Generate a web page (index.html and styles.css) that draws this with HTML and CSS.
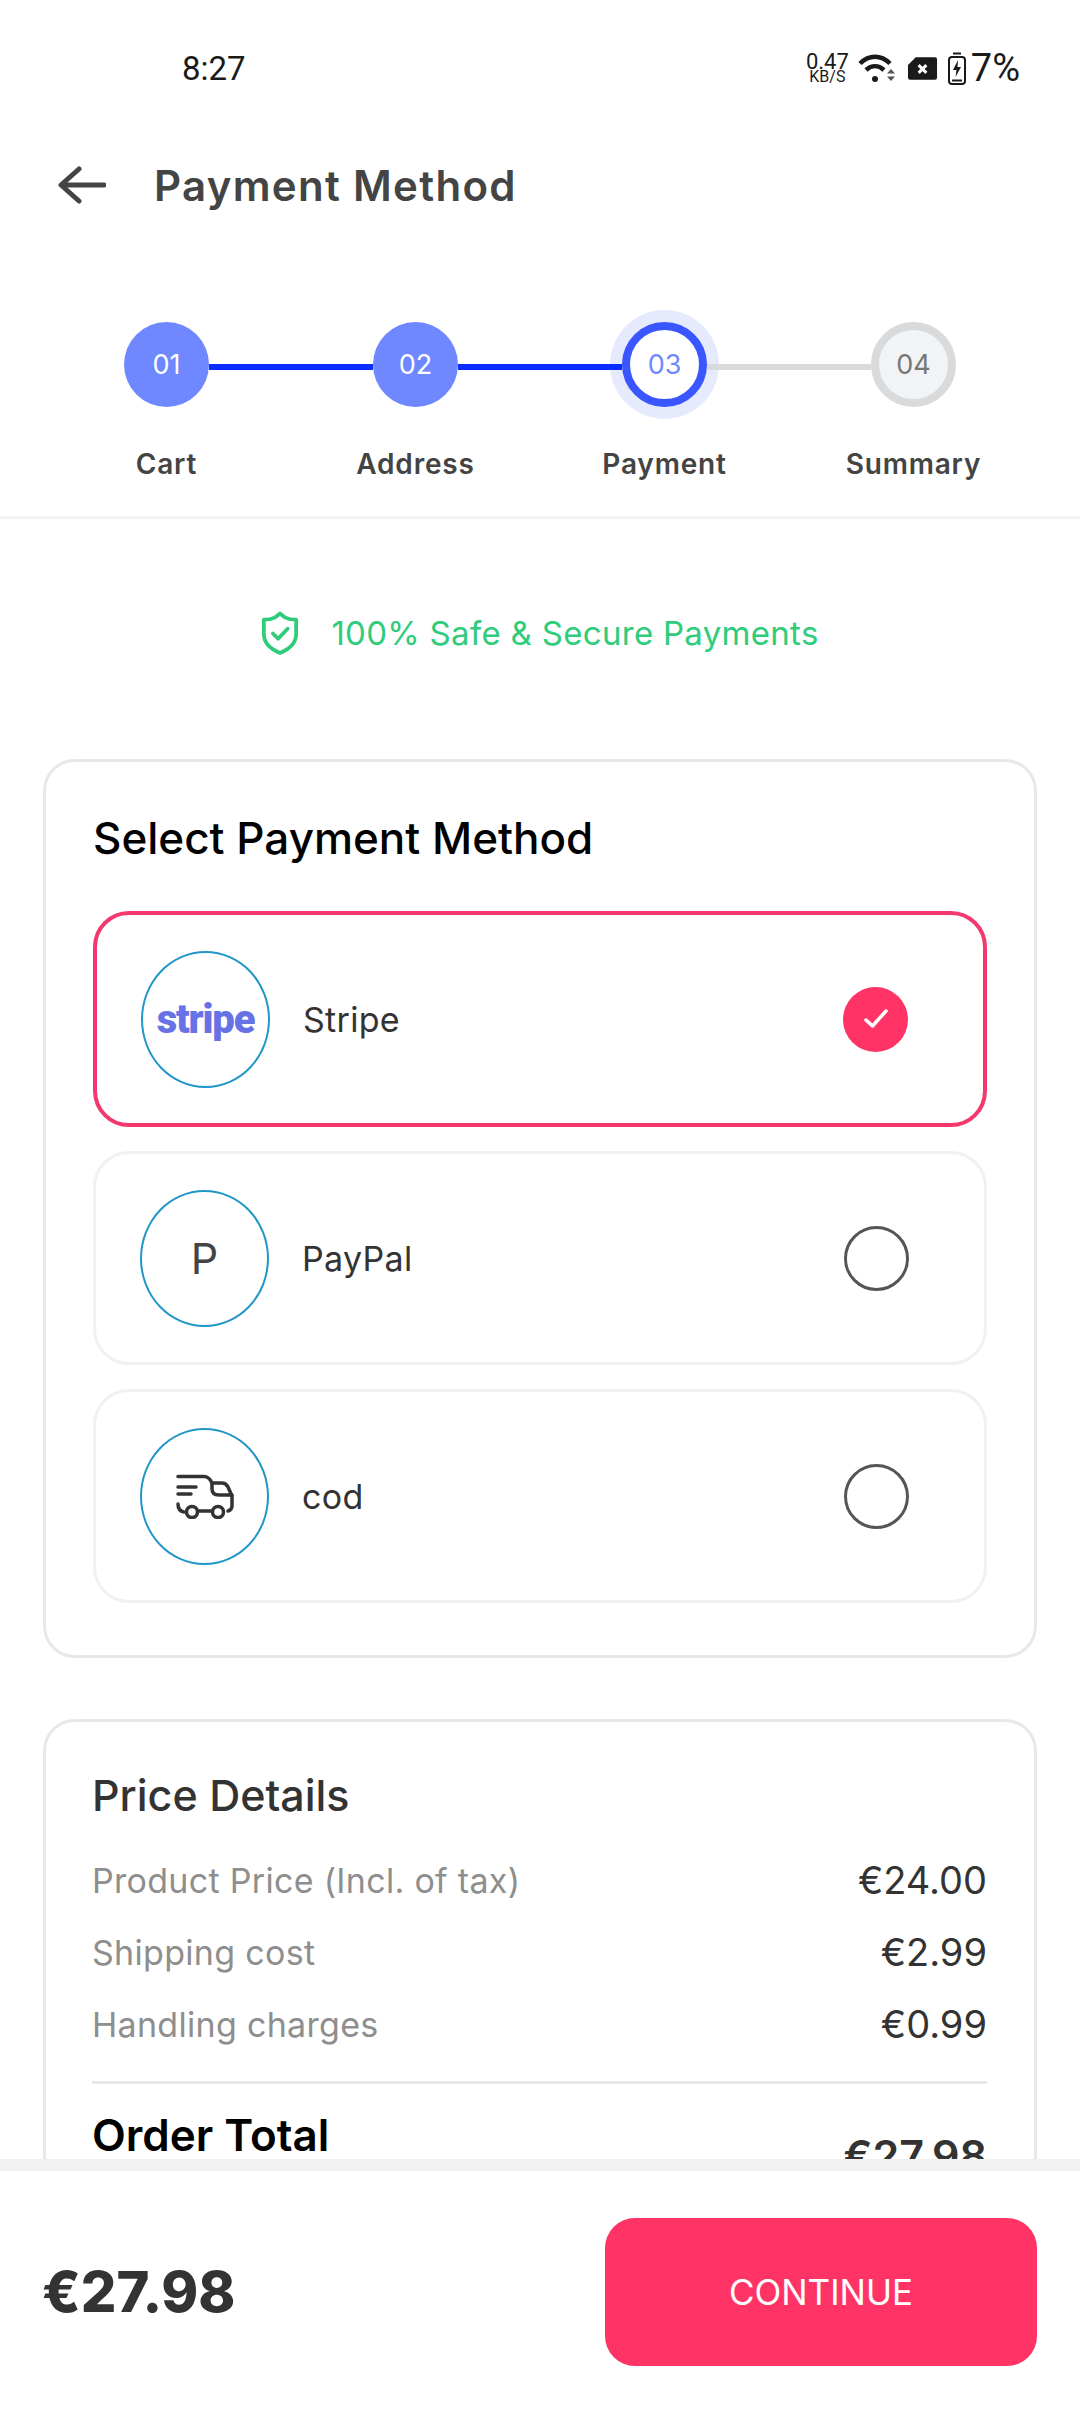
FILE: index.html
```html
<!DOCTYPE html>
<html lang="en">
<head>
  <meta charset="UTF-8">
  <meta name="viewport" content="width=device-width, initial-scale=1.0">
  <title>Payment Method</title>
  <link rel="stylesheet" href="styles.css">
</head>
<body>
<div class="screen">

  <div class="status-bar">
    <span class="time">8:27</span>
    <div class="status-icons">
      <span class="net-speed"><b>0.47</b><i>KB/S</i></span>
      <svg class="wifi" width="38" height="30" viewBox="0 0 38 30">
        <path d="M2 10.500C11 1.500 23 1.500 32 10.500" fill="none" stroke="#1a1a1a" stroke-width="4.500"/>
        <path d="M8 17C13.500 12 20.500 12 26 17" fill="none" stroke="#1a1a1a" stroke-width="4.500"/>
        <circle cx="17" cy="26" r="3" fill="#1a1a1a"/>
        <path d="M29 20.500L33 16L37 20.500ZM29 23.500L33 28L37 23.500Z" fill="#555"/>
      </svg>
      <svg class="sim" width="31" height="25" viewBox="0 0 32 25">
        <path d="M9 1H29Q31 1 31 3V22Q31 24 29 24H3Q1 24 1 22V9Z" fill="#1a1a1a"/>
        <path d="M12 9L20 17M20 9L12 17" stroke="#fff" stroke-width="3"/>
      </svg>
      <svg class="battery" width="20" height="33" viewBox="0 0 20 33">
        <path d="M6 1.500H14" stroke="#1a1a1a" stroke-width="2"/>
        <rect x="2" y="5" width="16" height="27" rx="3" fill="none" stroke="#1a1a1a" stroke-width="2"/>
        <path d="M11 8L6 18H9.500L8.500 25L14 15H10.500Z" fill="#1a1a1a"/>
        <path d="M5 28.500H15" stroke="#1a1a1a" stroke-width="2"/>
      </svg>
      <span class="battery-pct">7%</span>
    </div>
  </div>

  <div class="top-bar">
    <svg class="back" width="48" height="38" viewBox="0 0 48 38">
      <path d="M46 19H4M21 3L3 19L21 35" fill="none" stroke="#444" stroke-width="5" stroke-linecap="round" stroke-linejoin="round"/>
    </svg>
    <h1>Payment Method</h1>
  </div>

  <div class="stepper">
    <div class="step-track">
      <span class="step-dot done">01</span>
      <span class="step-line done"></span>
      <span class="step-dot done">02</span>
      <span class="step-line done"></span>
      <span class="step-dot current">03</span>
      <span class="step-line"></span>
      <span class="step-dot">04</span>
    </div>
    <div class="step-labels">
      <span>Cart</span>
      <span>Address</span>
      <span>Payment</span>
      <span>Summary</span>
    </div>
  </div>

  <div class="safe-note">
    <svg width="38" height="46" viewBox="0 0 40 46">
      <path d="M20 2.500L25 6.500Q30 9 37 9V24Q37 37 20 44Q3 37 3 24V9Q10 9 15 6.500Z" fill="none" stroke="#2ecc7b" stroke-width="4" stroke-linejoin="round"/>
      <path d="M12.500 23.500L18 29L28 18.500" fill="none" stroke="#2ecc7b" stroke-width="4" stroke-linecap="round" stroke-linejoin="round"/>
    </svg>
    <span>100% Safe &amp; Secure Payments</span>
  </div>

  <section class="card methods">
    <h2>Select Payment Method</h2>

    <div class="method selected">
      <span class="method-logo"><span class="stripe-logo">stripe</span></span>
      <span class="method-name">Stripe</span>
      <span class="radio checked">
        <svg width="26" height="22" viewBox="0 0 26 22">
          <path d="M3 12L9.500 18L23 3" fill="none" stroke="#fff" stroke-width="3.500" stroke-linecap="round" stroke-linejoin="round"/>
        </svg>
      </span>
    </div>

    <div class="method">
      <span class="method-logo"><span class="logo-letter">P</span></span>
      <span class="method-name">PayPal</span>
      <span class="radio"></span>
    </div>

    <div class="method">
      <span class="method-logo">
        <svg width="58" height="46" viewBox="0 0 58 46">
          <g fill="none" stroke="#333" stroke-width="3.500" stroke-linecap="round" stroke-linejoin="round">
            <path d="M2 3.500H28Q33 3.500 36 10H46Q50 10 52 14L56 23V33Q56 37 52 38"/>
            <path d="M36 10V16Q36 22 43 22H56"/>
            <path d="M2 14H20M2 21H15"/>
            <path d="M2 31Q2 38 8 39M22 38H35"/>
            <circle cx="16" cy="39" r="5.500"/>
            <circle cx="42" cy="39" r="5.500"/>
          </g>
        </svg>
      </span>
      <span class="method-name">cod</span>
      <span class="radio"></span>
    </div>
  </section>

  <section class="card prices">
    <h3>Price Details</h3>
    <div class="price-row"><span>Product Price (Incl. of tax)</span><b>€24.00</b></div>
    <div class="price-row"><span>Shipping cost</span><b>€2.99</b></div>
    <div class="price-row"><span>Handling charges</span><b>€0.99</b></div>
    <div class="total-row">
      <span>Order Total</span>
      <b>€27.98</b>
    </div>
  </section>

  <div class="bottom-bar">
    <span class="bottom-total">€27.98</span>
    <button class="continue" type="button">CONTINUE</button>
  </div>

</div>
</body>
</html>
```
FILE: styles.css
```css
* {
    box-sizing: border-box;
}
html, body {
    margin: 0;
    padding: 0;
    background-color: #fff;
}
.screen {
    position: relative;
    width: 1080px;
    height: 2412px;
    overflow: hidden;
    font-family: Inter, "Noto Sans", sans-serif;
    color: #333;
}

/* status bar */
.status-bar {
    height: 130px;
    padding: 46px 60px 0 182px;
    display: flex;
    justify-content: space-between;
    align-items: flex-start;
}
.time {
    margin-top: 1px;
    font-family: Roboto, sans-serif;
    font-size: 33px;
    line-height: 44px;
    color: #1a1a1a;
}
.status-icons {
    display: flex;
    align-items: center;
    height: 44px;
    gap: 11px;
}
.net-speed {
    display: flex;
    flex-direction: column;
    align-items: center;
    margin-right: -2px;
    font-family: Roboto, sans-serif;
    color: #1a1a1a;
}
.net-speed b {
    font-weight: 400;
    font-size: 22px;
    line-height: 17px;
}
.net-speed i {
    font-style: normal;
    font-size: 16px;
    line-height: 13px;
}
.battery {
    margin-left: -2px;
}
.battery-pct {
    font-family: Roboto, sans-serif;
    font-size: 38px;
    color: #1a1a1a;
    margin-left: -7px;
}

/* header */
.top-bar {
    height: 110px;
    padding-left: 58px;
    display: flex;
    align-items: center;
}
.back {
    margin-right: 48px;
}
h1 {
    margin: 0;
    font-size: 42px;
    font-weight: 600;
    color: #444;
    letter-spacing: 1.3px;
}

/* checkout steps */
.stepper {
    padding-top: 82px;
    height: 279px;
    border-bottom: 3px solid #f2f3f4;
}
.step-track {
    display: flex;
    align-items: center;
    padding: 0 124px;
}
.step-dot {
    width: 85px;
    height: 85px;
    flex: none;
    border-radius: 50%;
    display: flex;
    align-items: center;
    justify-content: center;
    font-size: 27px;
    color: #777;
    background-color: #f2f3f5;
    border: 8px solid #d9dadb;
}
.step-dot.done {
    color: #fff;
    background-color: #6f87ff;
    border: 0;
}
.step-dot.current {
    color: #6f87ff;
    background-color: #fff;
    border-color: #3a57ff;
    box-shadow: 0 0 0 12px #e6eafd;
}
.step-line {
    position: relative;
    flex: 1;
    height: 6px;
    margin-top: 4px;
    background-color: #d9dadb;
}
.step-line.done {
    background-color: #0a2dff;
}
.step-labels {
    display: grid;
    grid-template-columns: repeat(4, 249px);
    padding: 38px 0 0 42px;
    font-size: 28px;
    font-weight: 600;
    letter-spacing: 0.8px;
    line-height: 38px;
    color: #444;
    text-align: center;
}

/* secure note */
.safe-note {
    height: 240px;
    padding-bottom: 13px;
    display: flex;
    align-items: center;
    justify-content: center;
    gap: 32px;
    font-size: 33px;
    letter-spacing: 0.3px;
    color: #2ecc7b;
}

/* cards */
.card {
    margin: 0 43px;
    border: 3px solid #e8e8e8;
    border-radius: 32px;
    background-color: #fff;
}
.methods {
    height: 899px;
    padding: 47px 47px 0;
}
h2 {
    margin: 0 0 44px;
    font-size: 44px;
    line-height: 58px;
    font-weight: 500;
    color: #000;
}
.method {
    height: 214px;
    margin-bottom: 24px;
    padding: 0 48px 0 44px;
    display: flex;
    align-items: center;
    border: 3px solid #f1f1f2;
    border-radius: 36px;
}
.method.selected {
    height: 216px;
    border: 4px solid #f2386c;
}
.method-logo {
    width: 129px;
    height: 137px;
    flex: none;
    border: 2px solid #2196c8;
    border-radius: 50%;
    display: flex;
    align-items: center;
    justify-content: center;
}
.stripe-logo {
    font-family: Roboto, sans-serif;
    font-size: 40px;
    font-weight: 900;
    letter-spacing: -1.2px;
    color: #6772e5;
}
.logo-letter {
    font-size: 43px;
    color: #444;
}
.method-name {
    flex: 1;
    margin-left: 33px;
    font-size: 34px;
    letter-spacing: 0.3px;
    color: #333;
}
.radio {
    width: 65px;
    height: 65px;
    flex: none;
    margin-right: 27px;
    border: 3px solid #555;
    border-radius: 50%;
    display: flex;
    align-items: center;
    justify-content: center;
}
.radio.checked {
    border: 0;
    background-color: #ff3366;
}

/* price details */
.prices {
    margin-top: 61px;
    height: 600px;
    padding: 44px 47px 0 46px;
}
h3 {
    margin: 0 0 20px;
    font-size: 43px;
    line-height: 58px;
    font-weight: 500;
    color: #333;
}
.price-row {
    height: 72px;
    display: flex;
    justify-content: space-between;
    align-items: center;
    font-size: 34px;
    letter-spacing: 0.3px;
    color: #8e8e8e;
}
.price-row b {
    font-weight: 400;
    font-size: 38px;
    letter-spacing: 0;
    color: #333;
}
.total-row {
    margin-top: 21px;
    padding-top: 26px;
    border-top: 3px solid #e8e8e8;
    display: flex;
    justify-content: space-between;
    align-items: flex-start;
    font-size: 44px;
    line-height: 50px;
    font-weight: 600;
    color: #000;
}
.total-row b {
    margin-top: 20px;
    font-size: 43px;
    font-weight: 600;
    color: #333;
}

/* bottom bar sits over the scrolling content */
.bottom-bar {
    position: absolute;
    left: 0;
    right: 0;
    bottom: 0;
    height: 253px;
    padding: 47px 43px 46px 42px;
    display: flex;
    justify-content: space-between;
    align-items: center;
    background-color: #fff;
    border-top: 12px solid #f1f1f1;
}
.bottom-total {
    font-size: 56px;
    font-weight: 800;
    color: #333;
}
.continue {
    width: 432px;
    height: 148px;
    border: 0;
    border-radius: 30px;
    background-color: #ff3366;
    color: #fff;
    font-family: inherit;
    font-size: 35px;
    font-weight: 400;
}
```
